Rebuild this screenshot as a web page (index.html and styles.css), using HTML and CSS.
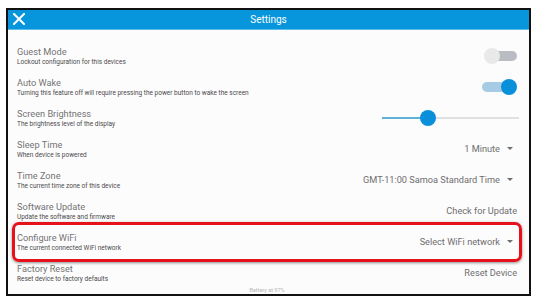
FILE: index.html
```html
<!DOCTYPE html>
<html lang="en">
<head>
    <meta charset="UTF-8">
    <title>Settings</title>
    <link rel="stylesheet" href="styles.css">
</head>
<body>
    <div class="frame">
        <header class="topbar">
            <svg class="close" width="12" height="12" viewBox="0 0 12 12">
                <path d="M1 1 L11 11 M11 1 L1 11" stroke="#fff" stroke-width="2" stroke-linecap="square"/>
            </svg>
            <div class="topbar-title">Settings</div>
        </header>

        <div class="settings">
            <div class="row">
                <div class="label">
                    <div class="title">Guest Mode</div>
                    <div class="sub">Lockout configuration for this devices</div>
                </div>
                <div class="switch"><span class="track"></span><span class="thumb"></span></div>
            </div>
            <div class="row">
                <div class="label">
                    <div class="title">Auto Wake</div>
                    <div class="sub">Turning this feature off will require pressing the power button to wake the screen</div>
                </div>
                <div class="switch on"><span class="track"></span><span class="thumb"></span></div>
            </div>
            <div class="row">
                <div class="label">
                    <div class="title">Screen Brightness</div>
                    <div class="sub">The brightness level of the display</div>
                </div>
                <div class="slider">
                    <span class="fill" style="width: 46px"></span>
                    <span class="knob"></span>
                </div>
            </div>
            <div class="row">
                <div class="label">
                    <div class="title">Sleep Time</div>
                    <div class="sub">When device is powered</div>
                </div>
                <div class="dropdown">1 Minute<span class="caret"></span></div>
            </div>
            <div class="row">
                <div class="label">
                    <div class="title">Time Zone</div>
                    <div class="sub">The current time zone of this device</div>
                </div>
                <div class="dropdown">GMT-11:00 Samoa Standard Time<span class="caret"></span></div>
            </div>
            <div class="row">
                <div class="label">
                    <div class="title">Software Update</div>
                    <div class="sub">Update the software and firmware</div>
                </div>
                <div class="action">Check for Update</div>
            </div>
            <div class="row highlighted">
                <div class="label">
                    <div class="title">Configure WiFi</div>
                    <div class="sub">The current connected WiFi network</div>
                </div>
                <div class="dropdown">Select WiFi network<span class="caret"></span></div>
            </div>
            <div class="row">
                <div class="label">
                    <div class="title">Factory Reset</div>
                    <div class="sub">Reset device to factory defaults</div>
                </div>
                <div class="action">Reset Device</div>
            </div>
            <div class="battery">Battery at 97%</div>
        </div>
    </div>
</body>
</html>
```

FILE: styles.css
```css
* {
    margin: 0;
    padding: 0;
    box-sizing: border-box;
    font-family: Roboto, "Noto Sans", Arial, sans-serif;
}

body {
    background-color: #fff;
}

.frame {
    margin: 8px 0 0 6px;
    width: 525px;
    height: 288px;
    border: 2px solid #111;
    background-color: #fdfcfd;
}

.topbar {
    position: relative;
    height: 20px;
    background-color: #0796db;
    border-bottom: 1px solid #5fbdea;
    display: flex;
    align-items: center;
    justify-content: center;
}

.close {
    position: absolute;
    left: 5px;
    top: 3px;
}

.topbar-title {
    color: #fff;
    font-size: 10px;
}

.settings {
    position: relative;
    padding: 10px 12px 0 9px;
}

.row {
    display: flex;
    justify-content: space-between;
    align-items: center;
    height: 31px;
}

.title {
    font-size: 9.2px;
    line-height: 13px;
    color: #747474;
}

.sub {
    font-size: 6.5px;
    line-height: 9px;
    color: #4a4a4a;
}

.highlighted::after {
    content: "";
    position: absolute;
    left: 4px;
    right: 7px;
    height: 34px;
    border: 3px solid #e5121b;
    border-radius: 7px;
    box-shadow: 0 1px 3px rgba(0, 0, 0, 0.45);
    pointer-events: none;
}

.switch {
    position: relative;
    width: 35px;
    height: 16px;
}

.switch .track {
    position: absolute;
    left: 6px;
    right: 0;
    top: 3px;
    height: 10px;
    border-radius: 5px;
    background-color: #b9bcc2;
}

.switch .thumb {
    position: absolute;
    left: 2px;
    top: 0;
    width: 16px;
    height: 16px;
    border-radius: 50%;
    background-color: #e9e9ea;
}

.switch.on .track {
    left: 0;
    right: 6px;
    background-color: #a6cbe4;
}

.switch.on .thumb {
    left: auto;
    right: 0;
    background-color: #0a8fdb;
}

.slider {
    position: relative;
    width: 137px;
    height: 2px;
    margin-right: -2px;
    background-color: #e1e1e3;
}

.slider .fill {
    display: block;
    height: 2px;
    background-color: #5fb2d6;
}

.slider .knob {
    position: absolute;
    left: 38px;
    top: -7px;
    width: 16px;
    height: 16px;
    border-radius: 50%;
    background-color: #0a8fdb;
}

.dropdown,
.action {
    font-size: 9.2px;
    color: #6e6e6e;
    display: flex;
    align-items: center;
}

.caret {
    width: 0;
    height: 0;
    margin: 0 4px 0 7px;
    border-left: 3px solid transparent;
    border-right: 3px solid transparent;
    border-top: 3px solid #6e6e6e;
}

.battery {
    margin-top: -1px;
    text-align: center;
    font-size: 5.5px;
    color: #b5b5b5;
}
```
